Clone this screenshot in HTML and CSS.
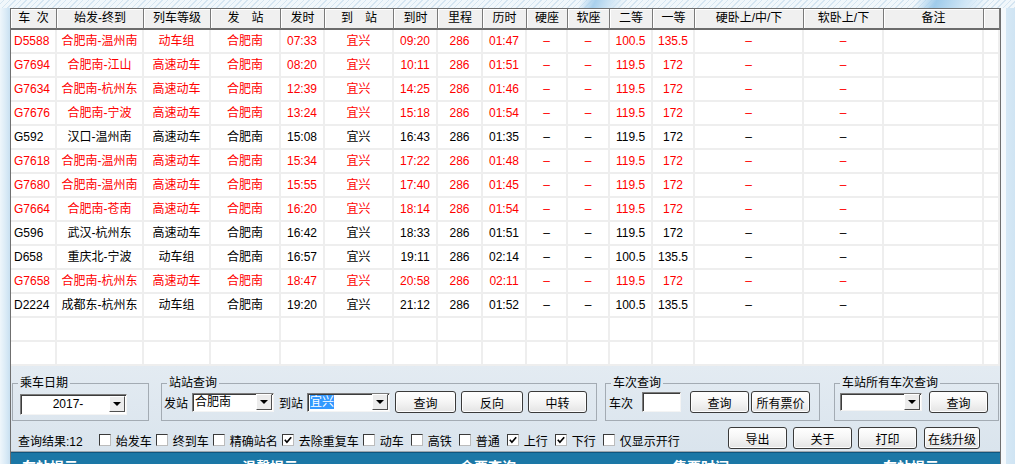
FILE: index.html
```html
<!DOCTYPE html>
<html lang="zh-CN">
<head>
<meta charset="utf-8">
<title>列车时刻查询</title>
<link rel="stylesheet" href="styles.css">
</head>
<body>
<div class="screen">
  <div class="topband"></div>
  <div class="frame">
    <div class="side-left"></div>
    <div class="window">
      <div class="grid">
        <div class="row head">
          <div class="c first">车&nbsp;&nbsp;次</div><div class="c">始发-终到</div><div class="c">列车等级</div><div class="c">发　站</div><div class="c">发时</div><div class="c">到　站</div><div class="c">到时</div><div class="c">里程</div><div class="c">历时</div><div class="c">硬座</div><div class="c">软座</div><div class="c">二等</div><div class="c">一等</div><div class="c">硬卧上/中/下</div><div class="c">软卧上/下</div><div class="c">备注</div><div class="c"></div>
        </div>
        <div class="row red">
          <div class="c first">D5588</div><div class="c">合肥南-温州南</div><div class="c">动车组</div><div class="c">合肥南</div><div class="c">07:33</div><div class="c">宜兴</div><div class="c">09:20</div><div class="c">286</div><div class="c">01:47</div><div class="c">–</div><div class="c">–</div><div class="c">100.5</div><div class="c">135.5</div><div class="c">–</div><div class="c">–</div><div class="c"></div><div class="c"></div>
        </div>
        <div class="row red">
          <div class="c first">G7694</div><div class="c">合肥南-江山</div><div class="c">高速动车</div><div class="c">合肥南</div><div class="c">08:20</div><div class="c">宜兴</div><div class="c">10:11</div><div class="c">286</div><div class="c">01:51</div><div class="c">–</div><div class="c">–</div><div class="c">119.5</div><div class="c">172</div><div class="c">–</div><div class="c">–</div><div class="c"></div><div class="c"></div>
        </div>
        <div class="row red">
          <div class="c first">G7634</div><div class="c">合肥南-杭州东</div><div class="c">高速动车</div><div class="c">合肥南</div><div class="c">12:39</div><div class="c">宜兴</div><div class="c">14:25</div><div class="c">286</div><div class="c">01:46</div><div class="c">–</div><div class="c">–</div><div class="c">119.5</div><div class="c">172</div><div class="c">–</div><div class="c">–</div><div class="c"></div><div class="c"></div>
        </div>
        <div class="row red">
          <div class="c first">G7676</div><div class="c">合肥南-宁波</div><div class="c">高速动车</div><div class="c">合肥南</div><div class="c">13:24</div><div class="c">宜兴</div><div class="c">15:18</div><div class="c">286</div><div class="c">01:54</div><div class="c">–</div><div class="c">–</div><div class="c">119.5</div><div class="c">172</div><div class="c">–</div><div class="c">–</div><div class="c"></div><div class="c"></div>
        </div>
        <div class="row">
          <div class="c first">G592</div><div class="c">汉口-温州南</div><div class="c">高速动车</div><div class="c">合肥南</div><div class="c">15:08</div><div class="c">宜兴</div><div class="c">16:43</div><div class="c">286</div><div class="c">01:35</div><div class="c">–</div><div class="c">–</div><div class="c">119.5</div><div class="c">172</div><div class="c">–</div><div class="c">–</div><div class="c"></div><div class="c"></div>
        </div>
        <div class="row red">
          <div class="c first">G7618</div><div class="c">合肥南-温州南</div><div class="c">高速动车</div><div class="c">合肥南</div><div class="c">15:34</div><div class="c">宜兴</div><div class="c">17:22</div><div class="c">286</div><div class="c">01:48</div><div class="c">–</div><div class="c">–</div><div class="c">119.5</div><div class="c">172</div><div class="c">–</div><div class="c">–</div><div class="c"></div><div class="c"></div>
        </div>
        <div class="row red">
          <div class="c first">G7680</div><div class="c">合肥南-温州南</div><div class="c">高速动车</div><div class="c">合肥南</div><div class="c">15:55</div><div class="c">宜兴</div><div class="c">17:40</div><div class="c">286</div><div class="c">01:45</div><div class="c">–</div><div class="c">–</div><div class="c">119.5</div><div class="c">172</div><div class="c">–</div><div class="c">–</div><div class="c"></div><div class="c"></div>
        </div>
        <div class="row red">
          <div class="c first">G7664</div><div class="c">合肥南-苍南</div><div class="c">高速动车</div><div class="c">合肥南</div><div class="c">16:20</div><div class="c">宜兴</div><div class="c">18:14</div><div class="c">286</div><div class="c">01:54</div><div class="c">–</div><div class="c">–</div><div class="c">119.5</div><div class="c">172</div><div class="c">–</div><div class="c">–</div><div class="c"></div><div class="c"></div>
        </div>
        <div class="row">
          <div class="c first">G596</div><div class="c">武汉-杭州东</div><div class="c">高速动车</div><div class="c">合肥南</div><div class="c">16:42</div><div class="c">宜兴</div><div class="c">18:33</div><div class="c">286</div><div class="c">01:51</div><div class="c">–</div><div class="c">–</div><div class="c">119.5</div><div class="c">172</div><div class="c">–</div><div class="c">–</div><div class="c"></div><div class="c"></div>
        </div>
        <div class="row">
          <div class="c first">D658</div><div class="c">重庆北-宁波</div><div class="c">动车组</div><div class="c">合肥南</div><div class="c">16:57</div><div class="c">宜兴</div><div class="c">19:11</div><div class="c">286</div><div class="c">02:14</div><div class="c">–</div><div class="c">–</div><div class="c">100.5</div><div class="c">135.5</div><div class="c">–</div><div class="c">–</div><div class="c"></div><div class="c"></div>
        </div>
        <div class="row red">
          <div class="c first">G7658</div><div class="c">合肥南-杭州东</div><div class="c">高速动车</div><div class="c">合肥南</div><div class="c">18:47</div><div class="c">宜兴</div><div class="c">20:58</div><div class="c">286</div><div class="c">02:11</div><div class="c">–</div><div class="c">–</div><div class="c">119.5</div><div class="c">172</div><div class="c">–</div><div class="c">–</div><div class="c"></div><div class="c"></div>
        </div>
        <div class="row">
          <div class="c first">D2224</div><div class="c">成都东-杭州东</div><div class="c">动车组</div><div class="c">合肥南</div><div class="c">19:20</div><div class="c">宜兴</div><div class="c">21:12</div><div class="c">286</div><div class="c">01:52</div><div class="c">–</div><div class="c">–</div><div class="c">100.5</div><div class="c">135.5</div><div class="c">–</div><div class="c">–</div><div class="c"></div><div class="c"></div>
        </div>
        <div class="row">
          <div class="c first"></div><div class="c"></div><div class="c"></div><div class="c"></div><div class="c"></div><div class="c"></div><div class="c"></div><div class="c"></div><div class="c"></div><div class="c"></div><div class="c"></div><div class="c"></div><div class="c"></div><div class="c"></div><div class="c"></div><div class="c"></div><div class="c"></div>
        </div>
        <div class="row">
          <div class="c first"></div><div class="c"></div><div class="c"></div><div class="c"></div><div class="c"></div><div class="c"></div><div class="c"></div><div class="c"></div><div class="c"></div><div class="c"></div><div class="c"></div><div class="c"></div><div class="c"></div><div class="c"></div><div class="c"></div><div class="c"></div><div class="c"></div>
        </div>
      </div>

      <div class="panel">
        <div class="groups">
          <fieldset class="box box-date">
            <legend>乘车日期</legend>
            <div class="box-row">
              <div class="combo combo-date"><span class="combo-text center">2017-</span><span class="drop"></span></div>
            </div>
          </fieldset>
          <fieldset class="box box-station">
            <legend>站站查询</legend>
            <div class="box-row">
              <span class="lbl">发站</span>
              <div class="combo combo-from"><span class="combo-text">合肥南</span><span class="drop"></span></div>
              <span class="lbl lbl-to">到站</span>
              <div class="combo combo-to"><span class="combo-text"><span class="sel">宜兴</span></span><span class="drop"></span></div>
              <button class="btn b-q1">查询</button>
              <button class="btn b-rev">反向</button>
              <button class="btn b-mid">中转</button>
            </div>
          </fieldset>
          <fieldset class="box box-train">
            <legend>车次查询</legend>
            <div class="box-row">
              <span class="lbl">车次</span>
              <div class="field"></div>
              <button class="btn b-q2">查询</button>
              <button class="btn b-price">所有票价</button>
            </div>
          </fieldset>
          <fieldset class="box box-all">
            <legend>车站所有车次查询</legend>
            <div class="box-row">
              <div class="combo combo-all"><span class="combo-text"></span><span class="drop"></span></div>
              <button class="btn b-q3">查询</button>
            </div>
          </fieldset>
        </div>

        <div class="options">
          <div class="opts-left">
            <span class="result">查询结果:12</span>
            <label class="opt first-opt"><span class="cb"></span><span class="txt">始发车</span></label>
            <label class="opt"><span class="cb"></span><span class="txt">终到车</span></label>
            <label class="opt"><span class="cb"></span><span class="txt">精确站名</span></label>
            <label class="opt"><span class="cb on"><svg viewBox="0 0 8 8" width="8" height="8"><polyline points="0.8,3.8 2.9,6.2 7.2,1.2" fill="none" stroke="#000" stroke-width="1.7"/></svg></span><span class="txt">去除重复车</span></label>
            <label class="opt"><span class="cb"></span><span class="txt">动车</span></label>
            <label class="opt wide"><span class="cb"></span><span class="txt">高铁</span></label>
            <label class="opt wide"><span class="cb"></span><span class="txt">普通</span></label>
            <label class="opt wide"><span class="cb on"><svg viewBox="0 0 8 8" width="8" height="8"><polyline points="0.8,3.8 2.9,6.2 7.2,1.2" fill="none" stroke="#000" stroke-width="1.7"/></svg></span><span class="txt">上行</span></label>
            <label class="opt wide"><span class="cb on"><svg viewBox="0 0 8 8" width="8" height="8"><polyline points="0.8,3.8 2.9,6.2 7.2,1.2" fill="none" stroke="#000" stroke-width="1.7"/></svg></span><span class="txt">下行</span></label>
            <label class="opt wide"><span class="cb"></span><span class="txt">仅显示开行</span></label>
          </div>
          <div class="opts-right">
            <button class="btn b-exp">导出</button>
            <button class="btn b-about">关于</button>
            <button class="btn b-print">打印</button>
            <button class="btn b-up">在线升级</button>
          </div>
        </div>
      </div>

      <div class="statusbar">
        <span class="st st1">车站提示</span>
        <span class="st st2">温馨提示</span>
        <span class="st st3">余票查询</span>
        <span class="st st4">售票时间</span>
        <span class="st st5">车站提示</span>
      </div>
    </div>
    <div class="side-right"></div>
  </div>
</div>
</body>
</html>
```

FILE: styles.css
```css
* { box-sizing: border-box; }
html, body { margin: 0; padding: 0; }
body {
  width: 1015px;
  height: 464px;
  overflow: hidden;
  background: #e3eef7;
  font-family: "Liberation Sans", "Noto Sans CJK SC", sans-serif;
  font-size: 12px;
  color: #000;
}
.screen { display: flex; flex-direction: column; height: 464px; }

.topband {
  height: 8px;
  flex: none;
  background:
    linear-gradient(115deg, transparent 57%, #a9d0ec 58.5%, #cfe5f5 60%, transparent 61.5%),
    linear-gradient(115deg, transparent 90%, #9fcbea 92%, #d2e7f6 95%, transparent 97%),
    repeating-linear-gradient(-45deg, #d5e5f1 0 1px, #f1f7fb 1px 4px);
}
.frame { display: flex; flex: 1; min-height: 0; }
.side-left {
  width: 10px;
  flex: none;
  background: linear-gradient(90deg, #eff6fb 0, #d9eaf6 60%, #c9e0f1 100%);
}
.side-right {
  flex: 1;
  background: linear-gradient(90deg, #f5f9fc 0 5px, #d6e8f5 5px, #cfe4f3 100%);
}
.window {
  width: 991px;
  flex: none;
  display: flex;
  flex-direction: column;
  border-top: 1px solid #6f6f6f;
  border-left: 1px solid #6f6f6f;
  border-right: 1px solid #6f6f6f;
}

/* ---------- grid ---------- */
.grid { background: #fff; flex: none; }
.row {
  display: grid;
  grid-template-columns: 46px 87px 67px 70px 44px 69px 44px 45px 44px 41px 42px 43px 42px 109px 80px 100px 16px;
  height: 24px;
}
.row .c {
  border-right: 2px solid #eeeeee;
  border-bottom: 2px solid #eeeeee;
  text-align: center;
  line-height: 22px;
  white-space: nowrap;
  overflow: hidden;
}
.row .c.first { text-align: left; padding-left: 3px; }
.row.red { color: #ff0000; }
.row.head { height: 21px; }
.row.head .c {
  background: #f0f0f0;
  border-right: 1px solid #7a7a7a;
  border-bottom: 2px solid #6c6c6c;
  box-shadow: inset 1px 1px 0 #ffffff;
  line-height: 19px;
}
.row.head .c.first { text-align: center; padding-left: 0; }

/* ---------- panel ---------- */
.panel {
  height: 86px;
  flex: none;
  padding-top: 10px;
  background: linear-gradient(#e3ebf2, #dae4ed);
  border-bottom: 1px solid #9ea6ad;
}
.groups { display: flex; align-items: flex-start; height: 45px; }
.box {
  margin: 0;
  padding: 0 0 5px 0;
  min-width: 0;
  border: 1px solid #a3abb3;
  height: 45px;
}
.box legend {
  font-size: 12px;
  line-height: 14px;
  padding: 0 2px;
  margin-left: 5px;
}
.box-date { margin-left: 1px; width: 137px; }
.box-station { margin-left: 12px; width: 436px; }
.box-train { margin-left: 8px; width: 215px; }
.box-all { margin-left: 14px; width: 165px; }

.box-row {
  display: flex;
  align-items: center;
  height: 26px;
  margin-top: -1px;
}
.box-date .box-row { padding-left: 7px; }
.box-station .box-row { padding-left: 2px; }
.box-train .box-row { padding-left: 3px; }
.box-all .box-row { padding-left: 5px; }

.lbl { white-space: nowrap; }
.lbl-to { margin-left: 5px; }

.combo {
  display: flex;
  align-items: center;
  height: 19px;
  background: #fff;
  border: 1px solid;
  border-color: #7c7c7c #f4f4f4 #f4f4f4 #7c7c7c;
  box-shadow: inset 1px 1px 0 #3c3c3c;
  padding: 1px 1px 1px 2px;
}
.combo-text { flex: 1; line-height: 15px; white-space: nowrap; overflow: hidden; }
.combo-text.center { text-align: center; padding-left: 4px; }
.sel { background: #3399ff; color: #fff; }
.drop {
  position: relative;
  width: 16px;
  height: 16px;
  flex: none;
  background: #ececec;
  border: 1px solid;
  border-color: #ffffff #505050 #505050 #ffffff;
}
.drop::after {
  content: "";
  position: absolute;
  left: 3px;
  top: 5px;
  border-left: 4px solid transparent;
  border-right: 4px solid transparent;
  border-top: 4px solid #000;
}
.combo-date { width: 107px; height: 21px; margin-top: 4px; }
.combo-from { width: 82px; margin-left: 4px; }
.combo-to { width: 83px; margin-left: 4px; }
.combo-all { width: 82px; height: 18px; }

.field {
  width: 39px;
  height: 20px;
  margin-left: 9px;
  background: #fff;
  border: 1px solid;
  border-color: #7c7c7c #f4f4f4 #f4f4f4 #7c7c7c;
  box-shadow: inset 1px 1px 0 #3c3c3c;
}

.btn {
  height: 22px;
  padding: 0;
  font-family: "Liberation Sans", "Noto Sans CJK SC", sans-serif;
  font-size: 12px;
  color: #000;
  border: 1px solid #3a3a3a;
  border-radius: 3px;
  background: linear-gradient(#ffffff 0%, #f6f6f6 45%, #e4e4e4 100%);
  box-shadow: inset 0 0 0 1px #fdfdfd;
}
.b-q1 { width: 61px; margin-left: 5px; }
.b-rev { width: 62px; margin-left: 5px; }
.b-mid { width: 59px; margin-left: 5px; }
.b-q2 { width: 59px; margin-left: 9px; }
.b-price { width: 59px; margin-left: 2px; }
.b-q3 { width: 59px; margin-left: 7px; }

/* ---------- options row ---------- */
.options {
  display: flex;
  align-items: flex-start;
  height: 30px;
  padding-left: 7px;
  padding-right: 20px;
}
.opts-left {
  display: flex;
  align-items: center;
  height: 16px;
  margin-top: 11px;
  white-space: nowrap;
}
.opt { display: flex; align-items: center; margin-left: 4px; }
.opt.first-opt { margin-left: 16px; }
.opt.wide { margin-left: 7px; }
.cb {
  width: 12px;
  height: 12px;
  flex: none;
  display: flex;
  align-items: center;
  justify-content: center;
  background: #fff;
  border: 1px solid;
  border-color: #3a3a3a #bcbcbc #bcbcbc #3a3a3a;
}
.cb svg { display: block; }
.txt { margin-left: 5px; }
.opts-right { display: flex; margin-left: auto; margin-top: 6px; }
.b-exp { width: 59px; }
.b-about { width: 59px; margin-left: 6px; }
.b-print { width: 59px; margin-left: 6px; }
.b-up { width: 56px; margin-left: 7px; }

/* ---------- status bar ---------- */
.statusbar {
  flex: 1;
  min-height: 0;
  overflow: hidden;
  display: flex;
  background: #1b77a6;
  border-top: 1px solid #0f557e;
  color: #fff;
  font-size: 14px;
  font-weight: bold;
  line-height: 16px;
  padding-top: 6px;
  white-space: nowrap;
}
.st1 { margin-left: 11px; }
.st2 { margin-left: 164px; }
.st3 { margin-left: 162px; }
.st4 { margin-left: 157px; }
.st5 { margin-left: 154px; }
```
